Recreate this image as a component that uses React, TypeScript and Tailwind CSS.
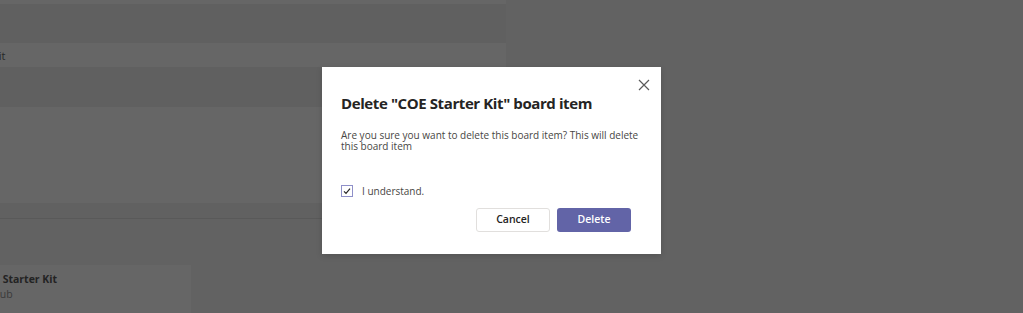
import React from "react";

export default function App() {
  return (
    <div
      className="relative w-[1023px] h-[313px] overflow-hidden bg-[#626262]"
      style={{ fontFamily: '"Open Sans", "Noto Sans", Arial, sans-serif' }}
    >
      {/* dimmed page behind */}
      <div className="flex flex-col w-[506px]">
        <div className="h-[4px] bg-[#666666]" />
        <div className="h-[39px] bg-[#606060]" />
        <div className="h-[24px] bg-[#666666] flex items-center overflow-hidden pt-[2px]">
          <span className="ml-[-8px] text-[11px] text-[#262626]">Kit</span>
        </div>
        <div className="h-[40px] bg-[#606060]" />
        <div className="h-[96px] bg-[#666666]" />
        <div className="h-[15px] bg-[#616161]" />
        <div className="h-[1px] bg-[#595959]" />
      </div>
      <div className="flex flex-col mt-[46px]">
        <div className="w-[191px] h-[48px] bg-[#666666] overflow-hidden pt-[7px]">
          <div className="ml-[-21px] text-[10.5px] font-bold leading-[14px] text-[#232323] whitespace-nowrap">
            COE Starter Kit
          </div>
          <div className="ml-[-8px] text-[10.5px] leading-[16px] text-[#3a3a3a] whitespace-nowrap">
            Hub
          </div>
        </div>
      </div>

      {/* dialog */}
      <div className="absolute left-[322px] top-[67px] w-[339px] h-[187px] bg-white shadow-[0_2px_6px_rgba(0,0,0,0.15)]">
        <button className="absolute right-[11px] top-[12px] w-[12px] h-[12px] flex items-center justify-center">
          <svg width="12" height="12" viewBox="0 0 12 12" fill="none">
            <path d="M1 1L11 11M11 1L1 11" stroke="#5a5a5a" strokeWidth="1.2" />
          </svg>
        </button>
        <div className="flex flex-col pl-[19px] pr-[20px] pt-[25px]">
          <div className="text-[15px] tracking-[-0.4px] font-bold leading-[22px] text-[#252423] whitespace-nowrap">
            Delete "COE Starter Kit" board item
          </div>
          <div className="mt-[16px] text-[10px] leading-[11px] text-[#484644]">
            Are you sure you want to delete this board item? This will delete
            this board item
          </div>
          <div className="mt-[33px] flex items-center gap-[9px]">
            <div className="w-[12px] h-[12px] border border-[#8f90c9] flex items-center justify-center">
              <svg width="8" height="8" viewBox="0 0 8 8" fill="none">
                <path d="M1 4.3L3 6.3L7 1.6" stroke="#252423" strokeWidth="1.2" />
              </svg>
            </div>
            <span className="text-[10px] leading-[12px] text-[#484644]">I understand.</span>
          </div>
          <div className="mt-[11px] flex justify-end gap-[7px] pr-[10px]">
            <button className="w-[74px] h-[24px] rounded-[3px] border border-[#e1dfdd] bg-white text-[10.5px] font-semibold text-[#252423]">
              Cancel
            </button>
            <button className="w-[74px] h-[24px] rounded-[3px] bg-[#6264a7] text-[10.5px] font-semibold text-white">
              Delete
            </button>
          </div>
        </div>
      </div>
    </div>
  );
}
